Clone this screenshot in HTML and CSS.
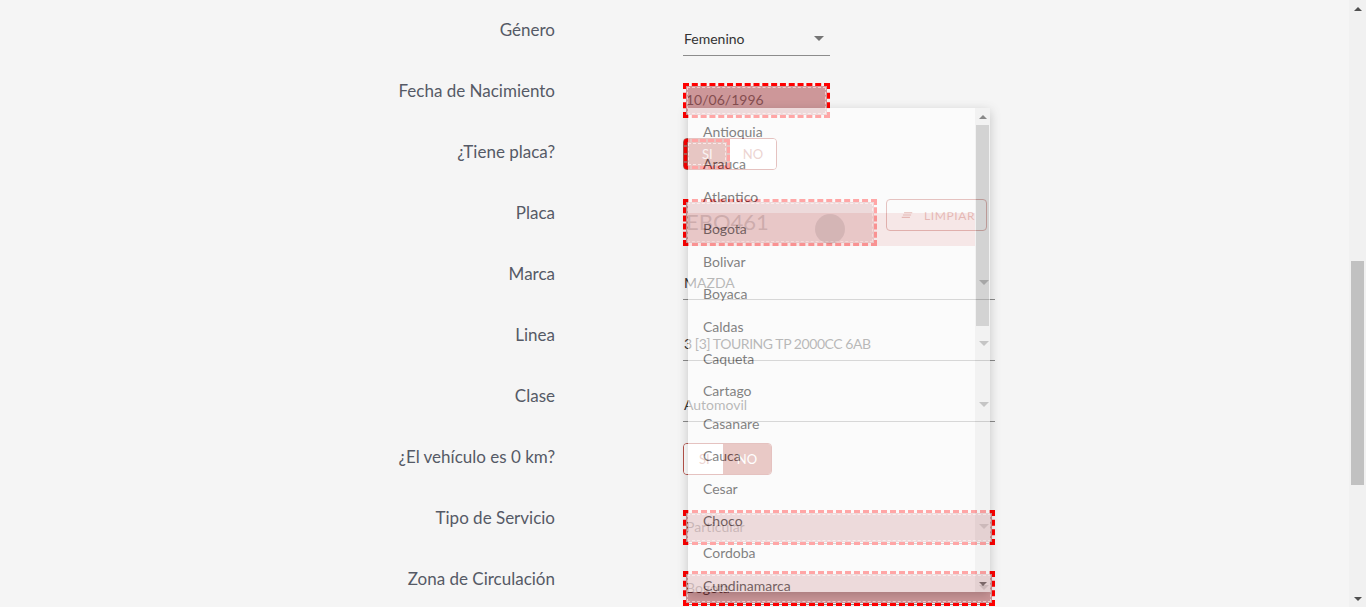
FILE: index.html
```html
<!DOCTYPE html>
<html lang="es">
<head>
<meta charset="utf-8">
<title>Cotizador</title>
<link rel="stylesheet" href="styles.css">
</head>
<body>
<main class="page">
  <form class="form">
    <div class="row"><label class="label">Género</label><div class="select w-sm"><span class="val">Femenino</span><span class="caret"></span></div></div>
    <div class="row"><label class="label">Fecha de Nacimiento</label><div class="select w-sm plain"><span class="val date">10/06/1996</span><span class="hl"></span></div></div>
    <div class="row"><label class="label">¿Tiene placa?</label>
      <div class="toggle"><span class="opt on wide">SI<span class="hl hl-btn"></span></span><span class="opt">NO</span></div>
    </div>
    <div class="row"><label class="label">Placa</label>
      <div class="plate-row">
        <div class="plate"><span class="plate-val">EBO461</span><span class="hl hl-full"></span></div>
        <button type="button" class="btn-clear"><svg class="ico" viewBox="0 0 24 24" width="14" height="14"><path d="M5 13h14v-2H5v2zm-2 4h14v-2H3v2zM7 7v2h14V7H7z" fill="currentColor"/></svg>LIMPIAR</button>
      </div>
    </div>
    <div class="row"><label class="label">Marca</label><div class="select w-lg"><span class="val">MAZDA</span><span class="caret"></span></div></div>
    <div class="row"><label class="label">Linea</label><div class="select w-lg"><span class="val caps">3 [3] TOURING TP 2000CC 6AB</span><span class="caret"></span></div></div>
    <div class="row"><label class="label">Clase</label><div class="select w-lg"><span class="val">Automovil</span><span class="caret"></span></div></div>
    <div class="row"><label class="label">¿El vehículo es 0 km?</label>
      <div class="toggle"><span class="opt narrow">SI</span><span class="opt on">NO</span></div>
    </div>
    <div class="row"><label class="label">Tipo de Servicio</label><div class="select w-lg"><span class="val soft">Particular</span><span class="caret"></span><span class="hl"></span></div></div>
    <div class="row"><label class="label">Zona de Circulación</label>
      <div class="select w-lg"><span class="val soft">Bogota</span><span class="caret"></span><span class="hl"></span>
        <div class="panel">
          <ul class="options">
            <li>Antioquia</li><li>Arauca</li><li>Atlantico</li>
            <li class="sel">Bogota<span class="ripple"></span></li>
            <li>Bolivar</li><li>Boyaca</li><li>Caldas</li><li>Caqueta</li><li>Cartago</li><li>Casanare</li><li>Cauca</li><li>Cesar</li><li>Choco</li><li>Cordoba</li><li>Cundinamarca</li><li>Guainia</li><li>Guaviare</li>
          </ul>
          <div class="sbar sbar-panel">
            <span class="arr up"></span>
            <span class="track"><span class="thumb"></span></span>
            <span class="arr down"></span>
          </div>
        </div>
      </div>
    </div>
  </form>
</main>
<div class="sbar sbar-page">
  <span class="arr up"></span>
  <span class="track"><span class="thumb"></span></span>
  <span class="arr down"></span>
</div>
</body>
</html>
```

FILE: styles.css
```css
html, body { margin: 0; padding: 0; }
body {
  background: #f5f5f5;
  font-family: Lato, "Liberation Sans", sans-serif;
  color: #333;
  overflow: hidden;
  height: 607px;
}
.page { padding-top: 0; }
.form { margin: 0; }
.row {
  display: grid;
  grid-template-columns: 555px 312px;
  column-gap: 128px;
  height: 61px;
  align-items: start;
}
.label {
  text-align: right;
  font-size: 17px;
  line-height: 24px;
  padding-top: 18px;
  color: #555a66;
}
.select {
  position: relative;
  box-sizing: border-box;
  margin-top: 22px;
  height: 34px;
  border-bottom: 1px solid #8c8c8c;
  display: flex;
  align-items: center;
  padding: 0 6px 1px 1px;
  font-size: 14px;
}
.select.plain { border-bottom-color: transparent; }
.w-sm { width: 147px; }
.w-lg { width: 312px; }
.val { color: #333; white-space: nowrap; }
.val.caps { letter-spacing: -0.45px; }
.val.date { padding-left: 2px; color: #707070; }
.val.soft { padding-left: 2px; }
.caret {
  margin-left: auto;
  width: 0; height: 0;
  border-left: 5px solid transparent;
  border-right: 5px solid transparent;
  border-top: 5px solid #757575;
}
.hl {
  position: absolute;
  top: 0; left: 0; right: 0; bottom: -2px;
  box-sizing: border-box;
  border: 3px dashed #ff0000;
  background: rgba(157, 37, 43, 0.45);
  background-clip: padding-box;
  outline: 1px dashed rgba(255, 215, 215, 0.8);
  outline-offset: -5px;
  pointer-events: none;
}
.hl-full { bottom: 0; }
.hl-btn { bottom: 0; background: rgba(157, 37, 43, 0.15); }
.toggle {
  margin-top: 16px;
  display: inline-flex;
  justify-self: start;
  height: 32px;
  box-sizing: border-box;
  border: 1px solid #b5524a;
  border-radius: 4px;
  overflow: hidden;
}
.opt {
  position: relative;
  display: flex;
  align-items: center;
  padding: 0 13px;
  font-size: 13px;
  color: #c9847b;
  background: #fff;
}
.opt.narrow { padding: 0 13px 0 15px; }
.opt.on { background: #c0655c; color: #fff; padding: 0 14px; }
.opt.on.wide { padding: 0 17px 0 18px; }
.plate-row {
  margin-top: 16px;
  display: flex;
  gap: 9px;
  align-items: flex-start;
  width: 320px;
}
.plate {
  position: relative;
  width: 194px;
  height: 47px;
  flex: none;
  display: flex;
  align-items: center;
  padding-left: 3px;
  box-sizing: border-box;
}
.plate-val { font-size: 22px; color: #666; margin-top: -3px; }
.btn-clear {
  flex: none;
  width: 101px;
  height: 32px;
  display: flex;
  align-items: center;
  justify-content: center;
  gap: 10px;
  background: transparent;
  border: 1px solid #b5524a;
  border-radius: 4px;
  color: #c46a60;
  font-family: Lato, "Liberation Sans", sans-serif;
  font-size: 12px;
  letter-spacing: 0.6px;
  padding: 0 0 0 2px;
}
.ico { display: block; }
.panel {
  position: absolute;
  left: 5px;
  top: -463px;
  width: 302px;
  height: 484px;
  display: flex;
  background: #fff;
  opacity: 0.65;
  box-shadow: 0 3px 10px rgba(0, 0, 0, 0.3);
  overflow: hidden;
  z-index: 10;
}
.options {
  flex: 1;
  margin: 0;
  padding: 8px 0 0;
  list-style: none;
  overflow: hidden;
}
.options li {
  position: relative;
  height: 32.43px;
  line-height: 32.43px;
  padding-left: 15px;
  font-size: 14px;
  color: #444;
  white-space: nowrap;
}
.options li.sel { background: #f7e1e1; }
.ripple {
  position: absolute;
  left: 127px;
  top: 1px;
  width: 30px;
  height: 30px;
  border-radius: 50%;
  background: rgba(0, 0, 0, 0.12);
}
.sbar {
  display: flex;
  flex-direction: column;
  background: #f1f1f1;
}
.sbar-panel { width: 15px; flex: none; }
.sbar-page {
  position: fixed;
  top: 0; right: 0; bottom: 0;
  width: 17px;
}
.arr {
  flex: none;
  height: 17px;
  display: flex;
  align-items: center;
  justify-content: center;
}
.arr::before {
  content: "";
  width: 0; height: 0;
  border-left: 4px solid transparent;
  border-right: 4px solid transparent;
}
.arr.up::before { border-bottom: 4px solid #505050; }
.arr.down::before { border-top: 4px solid #505050; }
.track { flex: 1; display: flex; flex-direction: column; padding: 0 2px; }
.thumb { display: block; background: #c1c1c1; }
.sbar-panel .track { padding: 0 1px; }
.sbar-panel .thumb { height: 201px; }
.sbar-page .thumb { margin-top: 244px; height: 224px; }
```
